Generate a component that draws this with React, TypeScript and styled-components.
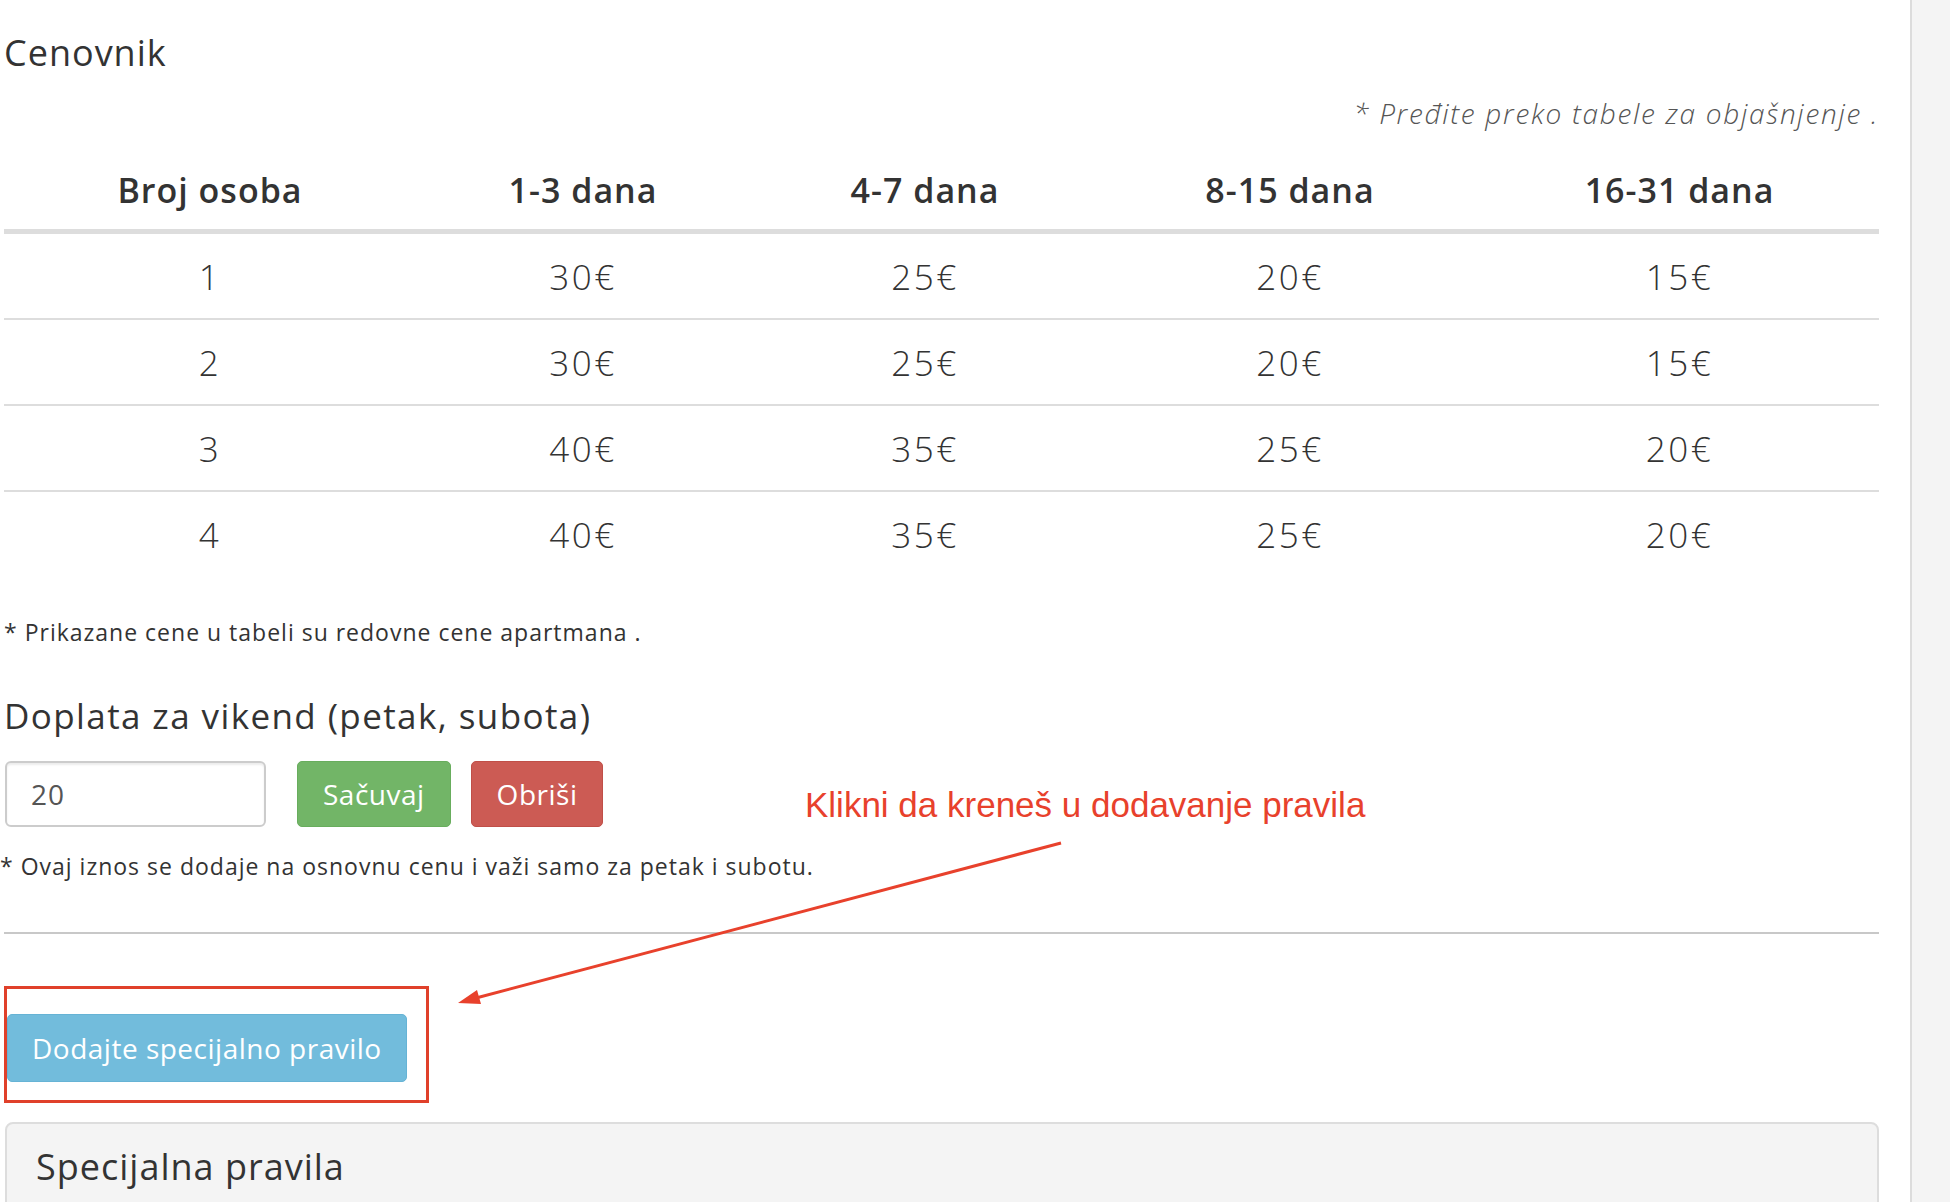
import React from 'react'
import styled, { createGlobalStyle } from 'styled-components'

const GlobalStyle = createGlobalStyle`
  html, body {
    margin: 0;
    padding: 0;
    overflow: hidden;
    background: #fff;
  }
  body {
    font-family: 'Open Sans', 'Noto Sans', sans-serif;
    color: #333;
  }
  * {
    box-sizing: border-box;
  }
`

const COLS = '412px 334px 350px 380px 399px'

const Page = styled.div`
  display: flex;
  height: 1202px;
  overflow: hidden;
`

const Main = styled.main`
  position: relative;
  width: 1912px;
  flex: none;
  padding: 0 31px 0 4px;
  border-right: 2px solid #dcdcdc;
`

const Side = styled.aside`
  flex: 1;
  background: #f4f4f4;
`

const Title = styled.h3`
  margin: 33px 0 0;
  font-size: 36px;
  font-weight: 500;
  letter-spacing: 1px;
  line-height: 39px;
`

const Hint = styled.p`
  margin: 23px 0 0;
  text-align: right;
  font-size: 28px;
  font-style: italic;
  font-weight: 300;
  letter-spacing: 1.7px;
  line-height: 36px;
  color: #555;
`

const PriceGrid = styled.div`
  display: flex;
  flex-direction: column;
`

const HeadRow = styled.div`
  display: grid;
  grid-template-columns: ${COLS};
  height: 84px;
  margin-top: 19px;
  border-bottom: 5px solid #ddd;
`

const BodyRow = styled.div`
  display: grid;
  grid-template-columns: ${COLS};
  height: 84px;

  & + & {
    height: 86px;
    border-top: 2px solid #ddd;
  }
`

const Cell = styled.div<{ $head?: boolean }>`
  display: flex;
  align-items: center;
  justify-content: center;
  font-size: ${({ $head }) => ($head ? '34px' : '35px')};
  font-weight: ${({ $head }) => ($head ? 600 : 300)};
  letter-spacing: ${({ $head }) => ($head ? '1px' : '2.5px')};
  color: #333;
`

const Note = styled.p<{ $top: number; $indent?: number }>`
  margin: ${({ $top }) => $top}px 0 0 ${({ $indent }) => $indent ?? 0}px;
  font-size: 23px;
  letter-spacing: 1px;
  line-height: 30px;
  color: #333;
`

const SubHeading = styled.h4`
  margin: 49px 0 0;
  font-size: 35px;
  font-weight: 400;
  letter-spacing: 1.4px;
  line-height: 40px;
`

const FormRow = styled.div`
  display: flex;
  align-items: center;
  gap: 20px;
  margin-top: 25px;
  margin-left: 1px;
`

const AmountInput = styled.input`
  width: 261px;
  height: 66px;
  margin-right: 11px;
  padding: 0 24px;
  border: 2px solid #ccc;
  border-radius: 6px;
  box-shadow: inset 0 2px 2px rgba(0, 0, 0, 0.075);
  font-family: inherit;
  font-size: 28px;
  letter-spacing: 1px;
  color: #555;
  outline: none;
`

const palette = {
  success: { bg: '#72b567', border: '#68ad5d' },
  danger: { bg: '#cc5b54', border: '#c04f48' },
  info: { bg: '#72bcdc', border: '#66b3d5' },
}

const Button = styled.button<{ $variant: keyof typeof palette; $tall?: boolean }>`
  height: ${({ $tall }) => ($tall ? 68 : 66)}px;
  padding: 0 ${({ $tall }) => ($tall ? 24 : 25)}px;
  border: 1px solid ${({ $variant }) => palette[$variant].border};
  border-radius: 5px;
  background: ${({ $variant }) => palette[$variant].bg};
  font-family: inherit;
  font-size: 28px;
  font-weight: 500;
  letter-spacing: 0.5px;
  color: #fff;
  cursor: pointer;
`

const Rule = styled.hr`
  margin: 51px 0 0;
  border: 0;
  border-top: 2px solid #c8c8c8;
`

const Callout = styled.div`
  width: fit-content;
  margin-top: 52px;
  padding: 25px 19px 18px 0;
  border: 3px solid #e0402a;
`

const Panel = styled.section`
  margin: 19px 0 0 1px;
  padding: 21px 29px 60px;
  border: 2px solid #ddd;
  border-radius: 8px;
  background: #f4f4f4;
`

const PanelTitle = styled.h3`
  margin: 0;
  font-size: 36px;
  font-weight: 500;
  letter-spacing: 1px;
  line-height: 44px;
`

const Annotation = styled.div`
  position: absolute;
  left: 805px;
  top: 787px;
  font-family: 'Liberation Sans', Arial, sans-serif;
  font-size: 35px;
  line-height: 35px;
  color: #e8412c;
  white-space: nowrap;
`

const ArrowLayer = styled.svg`
  position: absolute;
  top: 0;
  left: 0;
  pointer-events: none;
`

const headers = ['Broj osoba', '1-3 dana', '4-7 dana', '8-15 dana', '16-31 dana']

const prices = [
  ['1', '30€', '25€', '20€', '15€'],
  ['2', '30€', '25€', '20€', '15€'],
  ['3', '40€', '35€', '25€', '20€'],
  ['4', '40€', '35€', '25€', '20€'],
]

export default function App() {
  return (
    <>
      <GlobalStyle />
      <Page>
        <Main>
          <Title>Cenovnik</Title>
          <Hint>* Pređite preko tabele za objašnjenje .</Hint>

          <PriceGrid>
            <HeadRow>
              {headers.map((h) => (
                <Cell key={h} $head>
                  {h}
                </Cell>
              ))}
            </HeadRow>
            {prices.map((row) => (
              <BodyRow key={row[0]}>
                {row.map((v, i) => (
                  <Cell key={i}>{v}</Cell>
                ))}
              </BodyRow>
            ))}
          </PriceGrid>

          <Note $top={41}>* Prikazane cene u tabeli su redovne cene apartmana .</Note>

          <SubHeading>Doplata za vikend (petak, subota)</SubHeading>
          <FormRow>
            <AmountInput defaultValue="20" />
            <Button $variant="success">Sačuvaj</Button>
            <Button $variant="danger">Obriši</Button>
          </FormRow>
          <Note $top={24} $indent={-4}>
            * Ovaj iznos se dodaje na osnovnu cenu i važi samo za petak i subotu.
          </Note>

          <Rule />

          <Callout>
            <Button $variant="info" $tall>
              Dodajte specijalno pravilo
            </Button>
          </Callout>

          <Panel>
            <PanelTitle>Specijalna pravila</PanelTitle>
          </Panel>

          <Annotation>Klikni da kreneš u dodavanje pravila</Annotation>
          <ArrowLayer width="1910" height="1202" viewBox="0 0 1910 1202">
            <line x1="1061" y1="843" x2="476" y2="998" stroke="#e8412c" strokeWidth="3" />
            <polygon points="458,1003 481,1004 477,990" fill="#e8412c" />
          </ArrowLayer>
        </Main>
        <Side />
      </Page>
    </>
  )
}
